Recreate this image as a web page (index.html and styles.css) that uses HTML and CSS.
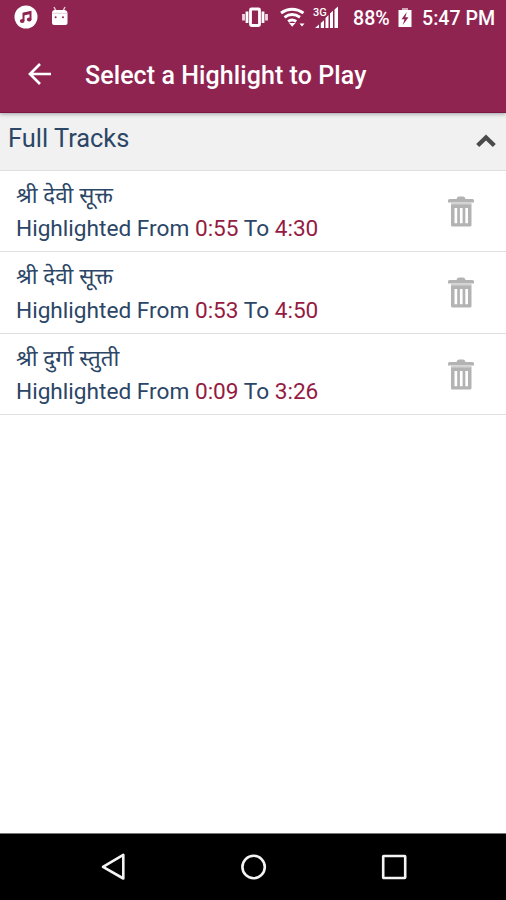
FILE: index.html
```html
<!DOCTYPE html>
<html lang="en">
<head>
<meta charset="utf-8">
<title>Select a Highlight to Play</title>
<link rel="stylesheet" href="styles.css">
</head>
<body>
<svg class="defs" width="0" height="0" aria-hidden="true">
  <symbol id="trash" viewBox="0 0 28 34">
    <path fill="#b3b3b3" d="M10 3Q10 1.500 12 1.500H16Q18 1.500 18 3L18.500 4H25.500Q27 4 27 5.500V7.500H1V5.500Q1 4 2.500 4H9.500Z"/>
    <path fill="#d2d2d2" d="M4 7.500H24.500V10H4Z"/>
    <path fill="#b3b3b3" fill-rule="evenodd" d="M4 9.500H24.500V30Q24.500 31.500 23 31.500H5.500Q4 31.500 4 30ZM7.500 13V28.300H10.200V13ZM12.900 13V28.300H15.600V13ZM18.300 13V28.300H21V13Z"/>
  </symbol>
</svg>
<div class="screen">
  <header class="top">
    <div class="status">
      <svg class="status-icons" width="60" height="37" viewBox="14 0 60 37">
        <circle cx="26" cy="17" r="11.500" fill="#fff"/>
        <path d="M23.500 21V13.500L30.500 12V19.500" fill="none" stroke="#902451" stroke-width="2"/>
        <path d="M23.500 14.300L30.500 12.800" stroke="#902451" stroke-width="2.500"/>
        <ellipse cx="22.200" cy="21" rx="2.300" ry="2" fill="#902451"/>
        <ellipse cx="29.200" cy="19.500" rx="2.300" ry="2" fill="#902451"/>
        <path d="M54 7L56 11M65 7L63 11" stroke="#e6c5d3" stroke-width="1.500"/>
        <path d="M52 13Q52 10 55 10H64Q67 10 67.500 13V23Q67.500 25 65.500 25H54Q52 25 52 23Z" fill="#fff"/>
        <path d="M52 13.300H67.500" stroke="#dfb7c9" stroke-width=".7"/>
        <circle cx="55.600" cy="17.300" r="1" fill="#902451"/><circle cx="63" cy="17.300" r="1" fill="#902451"/>
      </svg>
      <svg class="status-icons" width="100" height="37" viewBox="240 0 100 37">
        <rect x="250.500" y="9" width="9" height="16.500" rx="1" fill="none" stroke="#fff" stroke-width="2.800"/>
        <path d="M247 11.500V23M263 11.500V23" stroke="#fff" stroke-width="2.800"/>
        <path d="M243.500 14V20.500M266.500 14V20.500" stroke="#efd8e2" stroke-width="2.800"/>
        <path d="M281 13Q292 5.500 303.500 13M284.500 17.300Q292 11.800 300 17.300M288.200 21.500Q292 18.500 296.200 21.500" fill="none" stroke="#fff" stroke-width="2.900"/>
        <path d="M289 23H295.500L292.200 26.800ZM299.500 23.500H304.500L302 26.500Z" fill="#fff"/>
        <path d="M315 28L319 24.500V28ZM320.800 23L324 20.200V28H320.800ZM325.500 18L328.500 15V28H325.500ZM330 13.500L333 10.700V28H330ZM334.500 9.500L338 6.500V28H334.500Z" fill="#fff"/>
        <text x="313" y="15.500" class="network">3G</text>
      </svg>
      <span class="battery-text">88%</span>
      <svg class="battery" width="14" height="37" viewBox="398 0 14 37">
        <path d="M402 8H408V10H402Z" fill="#d3a7ba"/>
        <path d="M398.500 10H411.500V27H398.500Z" fill="#fff"/>
        <path d="M406.800 12L401.500 19.200H404.500L402.800 25L408.500 17.300H405.300Z" fill="#902451"/>
      </svg>
      <span class="time">5:47 PM</span>
    </div>
    <div class="toolbar">
      <svg class="back" width="24" height="24" viewBox="0 0 24 24"><path d="M24 11H3M13 1L3 11L13 21" fill="none" stroke="#fff" stroke-width="2.700"/></svg>
      <h1>Select a Highlight to Play</h1>
    </div>
  </header>
  <section class="group">
    <h2>Full Tracks</h2>
    <svg class="chevron" width="20" height="14" viewBox="0 0 20 14"><path d="M1.700 11.500L10 3.500L18.300 11.500" fill="none" stroke="#4b4b4b" stroke-width="4.400"/></svg>
  </section>
  <ul class="tracks">
    <li>
      <div><p class="name" lang="sa">श्री देवी सूक्त</p><p class="range">Highlighted From <b>0:55</b> To <b>4:30</b></p></div>
      <svg class="trash" width="28" height="34"><use href="#trash"/></svg>
    </li>
    <li>
      <div><p class="name" lang="sa">श्री देवी सूक्त</p><p class="range">Highlighted From <b>0:53</b> To <b>4:50</b></p></div>
      <svg class="trash" width="28" height="34"><use href="#trash"/></svg>
    </li>
    <li>
      <div><p class="name" lang="sa">श्री दुर्गा स्तुती</p><p class="range">Highlighted From <b>0:09</b> To <b>3:26</b></p></div>
      <svg class="trash" width="28" height="34"><use href="#trash"/></svg>
    </li>
  </ul>
  <nav class="nav">
    <svg width="28" height="28" viewBox="0 0 28 28"><path d="M24.300 1.800V25.500L4 13.800Z"/></svg>
    <svg width="28" height="28" viewBox="0 0 28 28"><circle cx="13.600" cy="14" r="11.200"/></svg>
    <svg width="28" height="28" viewBox="0 0 28 28"><rect x="3.200" y="3" width="22" height="22" rx=".5"/></svg>
  </nav>
</div>
</body>
</html>
```

FILE: styles.css
```css
* { box-sizing: border-box; }
body, h1, h2, p, ul { margin: 0; padding: 0; }
body { background: #fff; font-family: Roboto, "Noto Sans", sans-serif; }
svg { display: block; flex: none; }
.defs { display: none; }
.screen { width: 506px; height: 900px; display: flex; flex-direction: column; }
.top {
  height: 113px;
  flex: none;
  position: relative;
  background: #902451;
  color: #fff;
  border-bottom: 1px solid #7a1743;
  box-shadow: 0 1px 4px rgba(30, 30, 60, .4);
}
.status { height: 37px; display: flex; align-items: center; padding-left: 14px; font-size: 19.6px; font-weight: 500; }
.status-icons + .status-icons { margin-left: 166px; }
.network { font: 500 11px Roboto, sans-serif; fill: #fff; }
.battery-text { width: 45px; margin-left: 13px; white-space: nowrap; }
.time { margin-left: 10px; white-space: nowrap; }
.toolbar { height: 75px; display: flex; align-items: center; padding-left: 27px; }
h1 { margin-left: 34px; padding-top: 2px; font-size: 25px; font-weight: 500; letter-spacing: .08px; white-space: nowrap; }
.group {
  height: 57.5px;
  flex: none;
  display: flex;
  align-items: center;
  justify-content: space-between;
  padding: 0 10px 6px 8px;
  background: #f1f1f1;
  border-bottom: 1px solid #dedede;
}
h2 { color: #2b4666; font-size: 25.4px; font-weight: 400; }
.chevron { margin-top: 6px; }
.tracks { flex: 1; list-style: none; }
.tracks li {
  height: 81.6px;
  display: flex;
  justify-content: space-between;
  padding: 0 31px 0 16px;
  border-bottom: 1.5px solid #dfdfdf;
}
.name { height: 41.5px; padding-top: 10px; line-height: 34px; font-family: "Noto Sans Devanagari", "Noto Sans", sans-serif; font-size: 22.3px; color: #2b4666; }
.range { line-height: 34px; font-size: 22.65px; color: #2b4666; white-space: nowrap; }
.range b { font-weight: 400; color: #941b42; }
.trash { margin-top: 24px; }
.nav { height: 67px; flex: none; background: #000; border-top: 1px solid #777; display: flex; align-items: center; justify-content: space-between; padding: 0 98px 0 99px; }
.nav svg { fill: none; stroke: #f4f4f4; stroke-width: 2.6; stroke-linejoin: round; }
```
